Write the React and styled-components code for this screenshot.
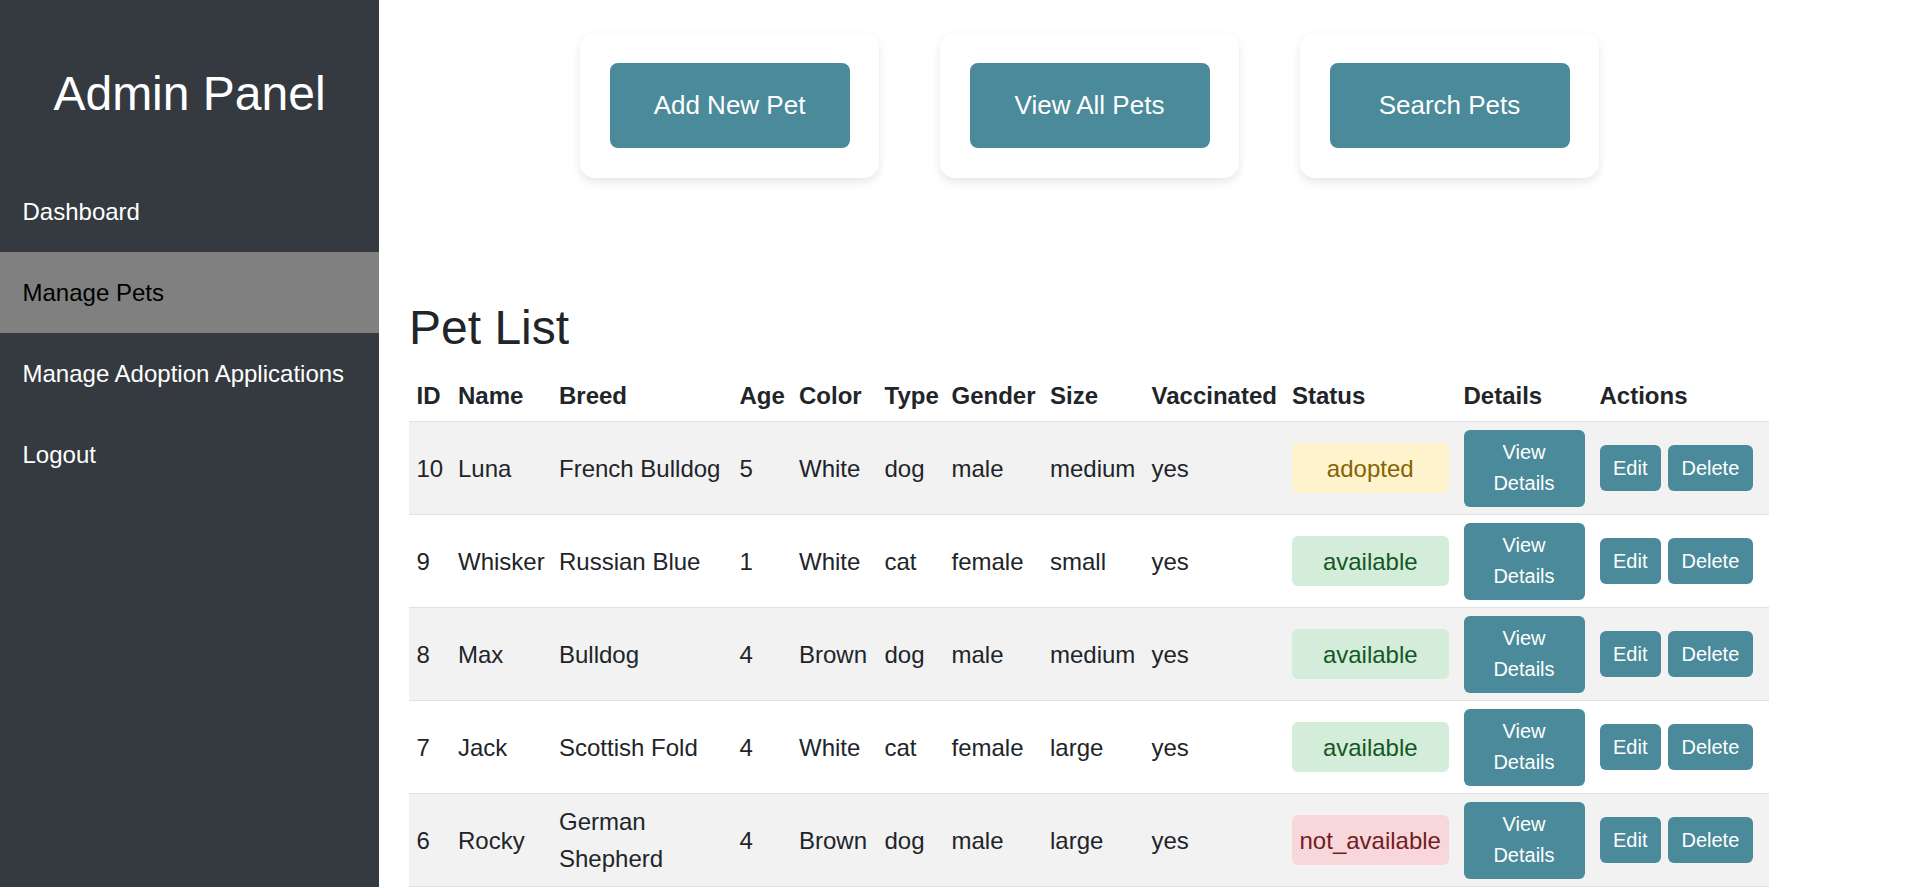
import React from "react"
import styled, { createGlobalStyle } from "styled-components"

const pets = [
    { id: 10, name: "Luna", breed: "French Bulldog", age: 5, color: "White", type: "dog", gender: "male", size: "medium", vaccinated: "yes", status: "adopted" },
    { id: 9, name: "Whisker", breed: "Russian Blue", age: 1, color: "White", type: "cat", gender: "female", size: "small", vaccinated: "yes", status: "available" },
    { id: 8, name: "Max", breed: "Bulldog", age: 4, color: "Brown", type: "dog", gender: "male", size: "medium", vaccinated: "yes", status: "available" },
    { id: 7, name: "Jack", breed: "Scottish Fold", age: 4, color: "White", type: "cat", gender: "female", size: "large", vaccinated: "yes", status: "available" },
    { id: 6, name: "Rocky", breed: "German Shepherd", age: 4, color: "Brown", type: "dog", gender: "male", size: "large", vaccinated: "yes", status: "not_available" },
    { id: 5, name: "Bella", breed: "Beagle", age: 3, color: "Brown", type: "dog", gender: "female", size: "medium", vaccinated: "yes", status: "available" },
    { id: 4, name: "Milo", breed: "Persian", age: 2, color: "Gray", type: "cat", gender: "male", size: "small", vaccinated: "no", status: "available" },
    { id: 3, name: "Coco", breed: "Siamese", age: 2, color: "Cream", type: "cat", gender: "female", size: "small", vaccinated: "yes", status: "adopted" },
    { id: 2, name: "Buddy", breed: "Labrador", age: 5, color: "Black", type: "dog", gender: "male", size: "large", vaccinated: "yes", status: "available" },
    { id: 1, name: "Daisy", breed: "Poodle", age: 3, color: "White", type: "dog", gender: "female", size: "small", vaccinated: "yes", status: "available" },
]

const columns = [
    { label: "ID", width: 41.5 },
    { label: "Name", width: 101 },
    { label: "Breed", width: 180.5 },
    { label: "Age", width: 59.5 },
    { label: "Color", width: 85.5 },
    { label: "Type", width: 67 },
    { label: "Gender", width: 98.5 },
    { label: "Size", width: 101.5 },
    { label: "Vaccinated", width: 140.5 },
    { label: "Status", width: 171.5 },
    { label: "Details", width: 136 },
    { label: "Actions", width: 177 },
]

const navItems = ["Dashboard", "Manage Pets", "Manage Adoption Applications", "Logout"]

class App extends React.Component {
    render() {
        return (
            <Page>
                <GlobalStyle />
                <Sidebar>
                    <SidebarTitle>Admin Panel</SidebarTitle>
                    <Nav>
                        {navItems.map(item => (
                            <NavItem key={item} $active={item === "Manage Pets"}>{item}</NavItem>
                        ))}
                    </Nav>
                </Sidebar>

                <Main>
                    <Content>
                        <CardsRow>
                            <Card><CardButton>Add New Pet</CardButton></Card>
                            <Card><CardButton>View All Pets</CardButton></Card>
                            <Card><CardButton>Search Pets</CardButton></Card>
                        </CardsRow>

                        <SectionTitle>Pet List</SectionTitle>

                        <Table>
                            <thead>
                                <HeadRow>
                                    {columns.map(col => (
                                        <Th key={col.label} $w={col.width}>{col.label}</Th>
                                    ))}
                                </HeadRow>
                            </thead>
                            <tbody>
                                {pets.map(pet => (
                                    <Row key={pet.id}>
                                        <Td>{pet.id}</Td>
                                        <Td>{pet.name}</Td>
                                        <Td>{pet.breed}</Td>
                                        <Td>{pet.age}</Td>
                                        <Td>{pet.color}</Td>
                                        <Td>{pet.type}</Td>
                                        <Td>{pet.gender}</Td>
                                        <Td>{pet.size}</Td>
                                        <Td>{pet.vaccinated}</Td>
                                        <Td><StatusBadge $status={pet.status}>{pet.status}</StatusBadge></Td>
                                        <Td><DetailsButton>View Details</DetailsButton></Td>
                                        <Td>
                                            <ActionGroup>
                                                <SmallButton>Edit</SmallButton>
                                                <SmallButton>Delete</SmallButton>
                                            </ActionGroup>
                                        </Td>
                                    </Row>
                                ))}
                            </tbody>
                        </Table>
                    </Content>
                </Main>
            </Page>
        )
    }
}

const GlobalStyle = createGlobalStyle`
    html, body {
        margin: 0;
        padding: 0;
        background: white;
        font-family: "Liberation Sans", Arial, sans-serif;
    }
    * {
        box-sizing: border-box;
    }
    ::-webkit-scrollbar {
        width: 25px;
    }
    ::-webkit-scrollbar-track {
        background: #f0f0f0;
    }
    ::-webkit-scrollbar-thumb {
        background: #c1c1c1;
        border-left: 2px solid #f0f0f0;
        border-right: 2px solid #f0f0f0;
    }
    ::-webkit-scrollbar-button:single-button {
        display: block;
        height: 29px;
        background: #f0f0f0;
    }
`

const statusColors = {
    adopted: { bg: "#fff3cd", fg: "#856404" },
    available: { bg: "#d4edda", fg: "#155724" },
    not_available: { bg: "#f8d7da", fg: "#721c24" },
}

const teal = "#4a8a9a"

const Page = styled.div`
    display: flex;
    min-height: 100vh;
`

const Sidebar = styled.aside`
    width: 379px;
    flex-shrink: 0;
    background: #343a40;
    color: white;
    min-height: 100vh;
`

const SidebarTitle = styled.h1`
    margin: 66px 0 0;
    font-size: 48px;
    font-weight: normal;
    line-height: 55px;
    text-align: center;
`

const Nav = styled.nav`
    margin-top: 50px;
    display: flex;
    flex-direction: column;
`

const NavItem = styled.div`
    height: 81px;
    display: flex;
    align-items: center;
    padding: 0 22.5px;
    font-size: 24px;
    color: ${props => (props.$active ? "#000" : "#fff")};
    background: ${props => (props.$active ? "#808080" : "transparent")};
    cursor: pointer;
`

const Main = styled.main`
    flex: 1;
    padding: 0 30px 140px;
`

const Content = styled.div`
    width: 1360px;
`

const CardsRow = styled.div`
    display: flex;
    justify-content: center;
    gap: 61px;
    padding-top: 33px;
`

const Card = styled.div`
    width: 299px;
    padding: 30px;
    background: white;
    border-radius: 15px;
    box-shadow: 0 4px 10px rgba(0, 0, 0, 0.1);
`

const CardButton = styled.button`
    width: 240px;
    height: 85px;
    border: none;
    border-radius: 8px;
    background: ${teal};
    color: white;
    font-family: inherit;
    font-size: 26px;
    cursor: pointer;
`

const SectionTitle = styled.h2`
    margin: 122px 0 0;
    font-size: 48px;
    font-weight: normal;
    line-height: 55px;
    color: #212529;
`

const Table = styled.table`
    margin-top: 19px;
    width: 1360px;
    table-layout: fixed;
    border-collapse: collapse;
    color: #212529;
    font-size: 24px;
`

const HeadRow = styled.tr`
    border-bottom: 1px solid #dee2e6;
`

const Th = styled.th`
    width: ${props => props.$w}px;
    padding: 7.5px 7.5px 11.5px;
    text-align: left;
    font-weight: bold;
    white-space: nowrap;
`

const Row = styled.tr`
    border-bottom: 1px solid #dee2e6;
    &:nth-child(odd) {
        background: #f2f2f2;
    }
`

const Td = styled.td`
    padding: 7.5px;
    vertical-align: middle;
    line-height: 37px;
`

const StatusBadge = styled.div`
    display: block;
    padding: 6.5px 0;
    border-radius: 6px;
    text-align: center;
    background: ${props => statusColors[props.$status].bg};
    color: ${props => statusColors[props.$status].fg};
`

const DetailsButton = styled.button`
    width: 100%;
    padding: 7.5px 12px;
    border: none;
    border-radius: 6px;
    background: ${teal};
    color: white;
    font-family: inherit;
    font-size: 20px;
    line-height: 31px;
    cursor: pointer;
`

const ActionGroup = styled.div`
    display: flex;
    gap: 7px;
`

const SmallButton = styled.button`
    padding: 7.5px 13.5px;
    border: none;
    border-radius: 6px;
    background: ${teal};
    color: white;
    font-family: inherit;
    font-size: 20px;
    line-height: 30.5px;
    cursor: pointer;
`

export default App
